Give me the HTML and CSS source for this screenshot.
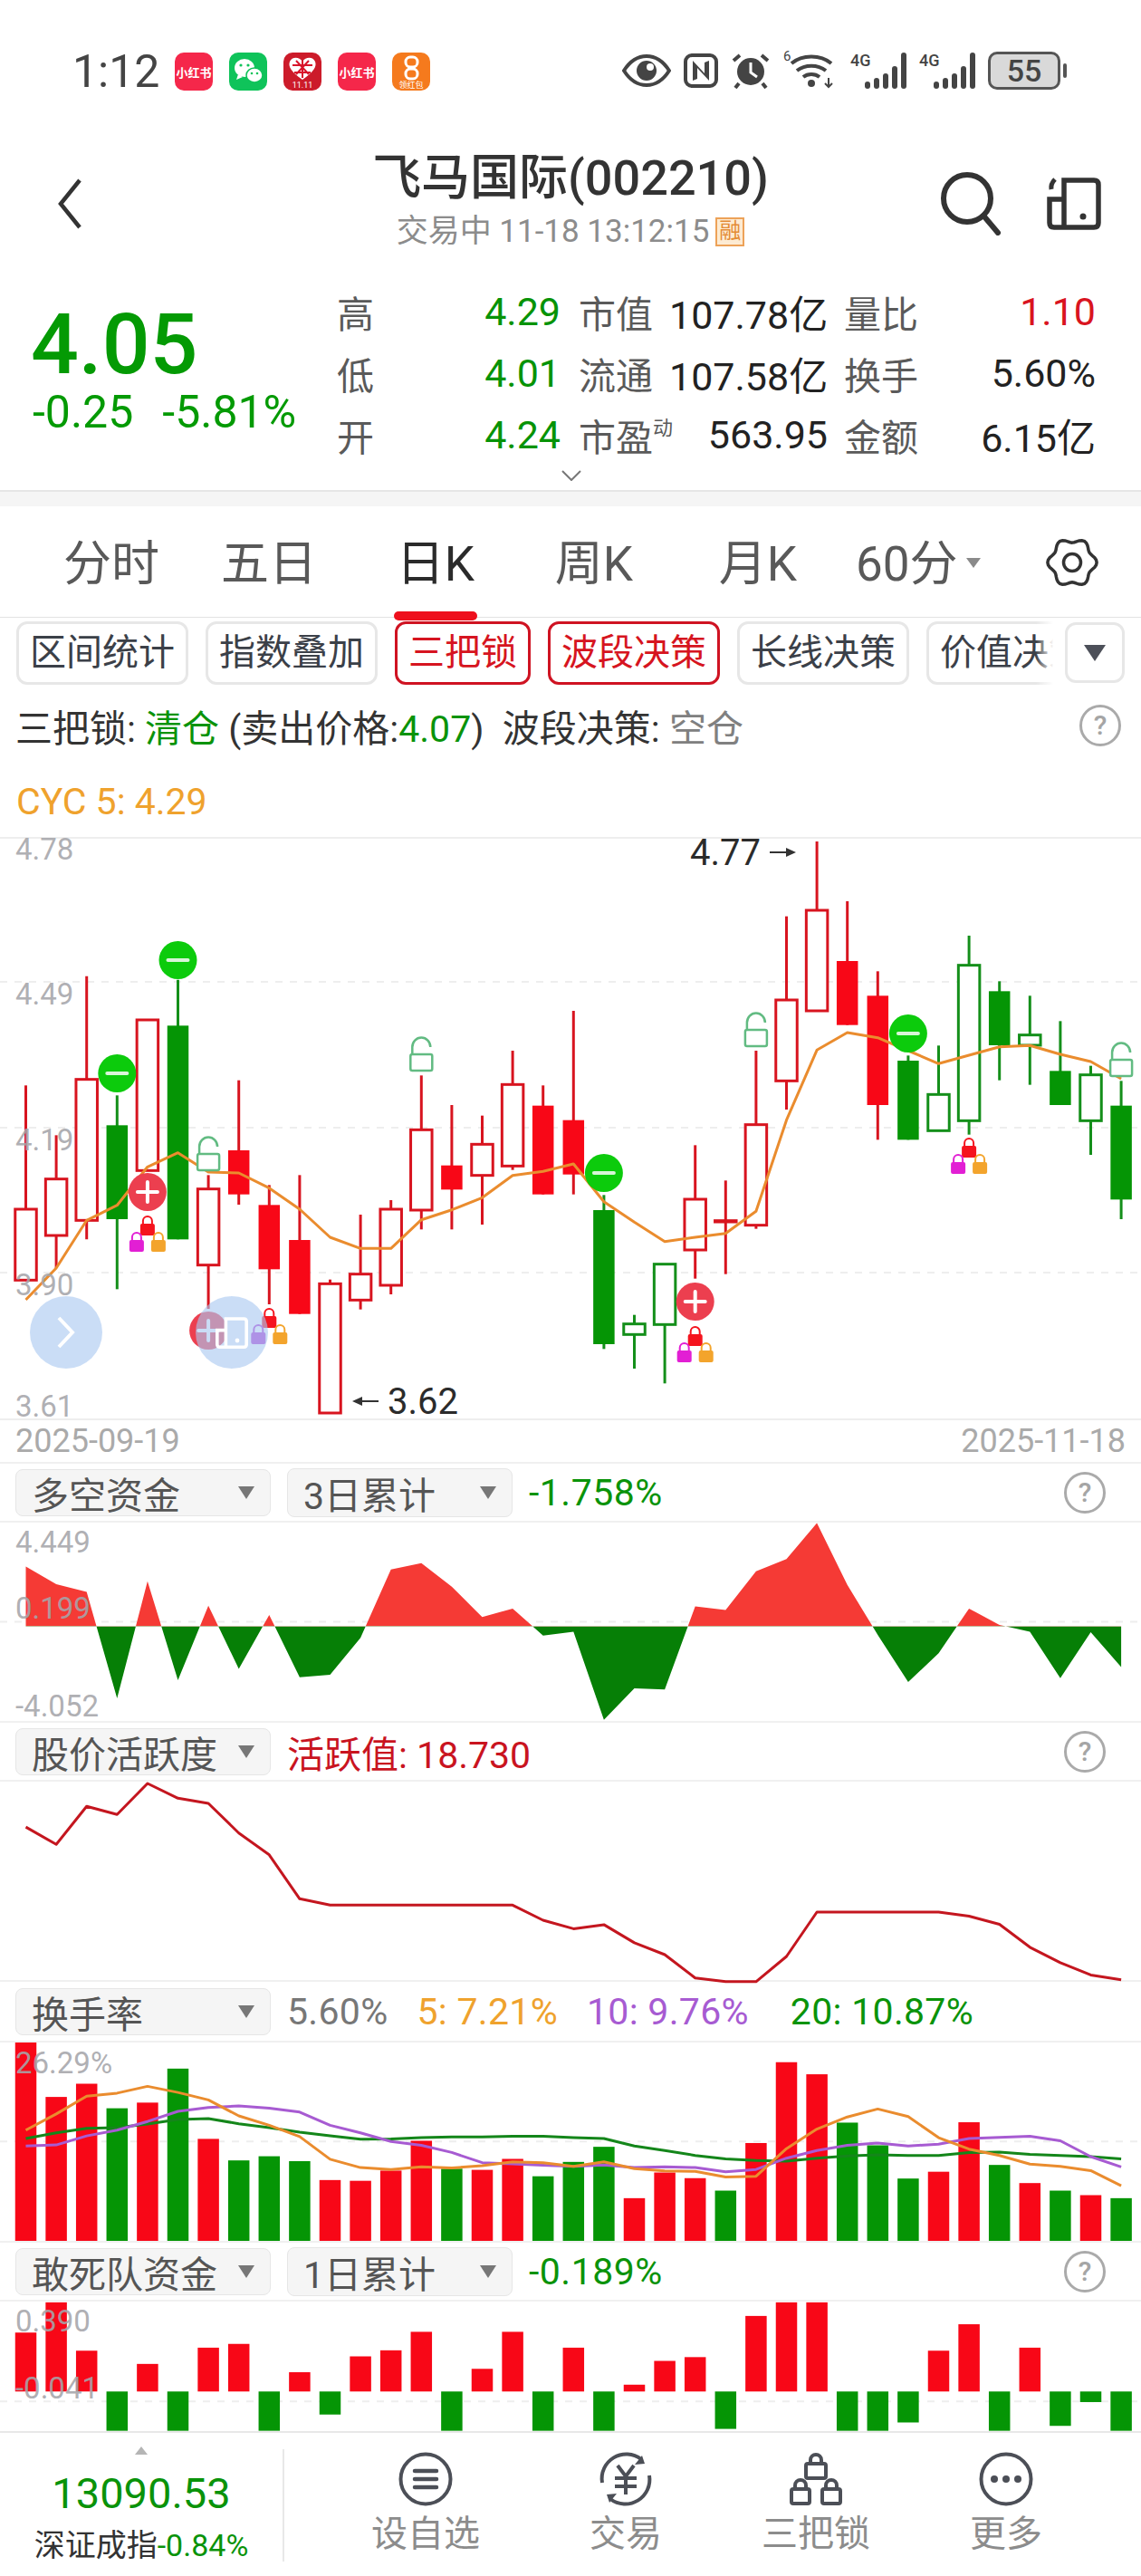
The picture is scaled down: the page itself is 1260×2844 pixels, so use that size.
FILE: index.html
```html
<!DOCTYPE html>
<html lang="zh-CN">
<head>
  <meta charset="UTF-8">
  <title>飞马国际(002210)</title>
  <link rel="stylesheet" href="styles.css">
</head>
<body>
  <div id="app">
    <div class="status">
      <span class="clock">1:12</span>
      <div class="apps">
        <span class="app app-xhs">小红书</span>
        <span class="app app-wx">
          <svg viewBox="0 0 40 42" width="40" height="42"><ellipse cx="16" cy="17" rx="11" ry="10" fill="#fff"/><path d="M9 24l-2 6 7-3z" fill="#fff"/><ellipse cx="27" cy="25" rx="9" ry="8" fill="#fff" stroke="#0fc35a" stroke-width="1.5"/><circle cx="12" cy="14" r="1.6" fill="#0fc35a"/><circle cx="20" cy="14" r="1.6" fill="#0fc35a"/><circle cx="24" cy="23" r="1.3" fill="#0fc35a"/><circle cx="30" cy="23" r="1.3" fill="#0fc35a"/></svg>
        </span>
        <span class="app app-tb">
          <svg viewBox="0 0 42 42" width="42" height="42"><path d="M21 30C8 21 5 15 7 10c2-5 10-6 14 0 4-6 12-5 14 0 2 5-1 11-14 20z" fill="#fff"/><path d="M21 9v19M10 14h22M12 22h18M14 9l14 15M28 9L14 24" stroke="#d8152b" stroke-width="2"/></svg>
          <em>11.11</em>
        </span>
        <span class="app app-xhs">小红书</span>
        <span class="app app-hb">
          <svg viewBox="0 0 42 42" width="42" height="42"><rect x="15" y="5" width="13" height="11" rx="5" fill="none" stroke="#fff" stroke-width="3"/><rect x="15" y="18" width="13" height="11" rx="5" fill="none" stroke="#fff" stroke-width="3"/></svg>
          <em>领红包</em>
        </span>
      </div>
      <div class="sys">
        <svg width="54" height="38" viewBox="0 0 54 38"><path d="M2 19C9 8 18 3 27 3s18 5 25 16c-7 11-16 16-25 16S9 30 2 19z" fill="none" stroke="#444" stroke-width="4"/><circle cx="27" cy="19" r="11" fill="#444"/><circle cx="31" cy="15" r="4" fill="#fff"/></svg>
        <svg width="38" height="38" viewBox="0 0 38 38"><rect x="2" y="2" width="34" height="34" rx="7" fill="none" stroke="#444" stroke-width="4"/><path d="M10 8v22l5-2V16l13 14V8l-5 2v12z" fill="#444"/></svg>
        <svg width="44" height="40" viewBox="0 0 44 40"><circle cx="22" cy="21" r="15" fill="#444"/><path d="M22 11v11l7 5" fill="none" stroke="#fff" stroke-width="3"/><path d="M3 9l7-6M41 9l-7-6M9 34l-4 5M35 34l4 5" stroke="#444" stroke-width="4"/></svg>
        <span class="wifi">
          <i>6</i>
          <svg width="54" height="40" viewBox="0 0 54 40"><path d="M3 12c12-10 32-10 44 0M9 20c9-7 23-7 32 0M16 27c5-4 13-4 18 0" fill="none" stroke="#444" stroke-width="4"/><circle cx="25" cy="34" r="4" fill="#444"/><path d="M44 28v10M40 34l4 4 4-4" fill="none" stroke="#444" stroke-width="2"/></svg>
        </span>
        <span class="signal"><i>4G</i><b class="s1"></b><b class="s2"></b><b class="s3"></b><b class="s4"></b><b class="s5"></b></span>
        <span class="signal"><i>4G</i><b class="s1"></b><b class="s2"></b><b class="s3"></b><b class="s4"></b><b class="s5"></b></span>
        <span class="battery"><span class="battery-body">55</span><span class="battery-tip"></span></span>
      </div>
    </div>

    <div class="header">
      <svg class="back" width="30" height="58" viewBox="0 0 30 58"><path d="M26 3L5 29l21 26" fill="none" stroke="#333" stroke-width="4.5"/></svg>
      <div class="title">
        <h1>飞马国际(002210)</h1>
        <p>交易中 11-18 13:12:15<span class="badge">融</span></p>
      </div>
      <svg class="search" width="72" height="70" viewBox="0 0 72 70"><circle cx="32" cy="29" r="26" fill="none" stroke="#333" stroke-width="6"/><path d="M50 48l16 19" stroke="#333" stroke-width="6" stroke-linecap="round"/></svg>
      <svg class="split" width="60" height="60" viewBox="0 0 60 60"><path d="M19 26V5h33q5 0 5 5v42q0 5-5 5H8q-5 0-5-5V26h16v31" fill="none" stroke="#333" stroke-width="5.5"/><circle cx="40" cy="45" r="3.5" fill="#333"/><path d="M9 4Q4 9 5 15" fill="none" stroke="#333" stroke-width="5"/></svg>
    </div>

    <div class="quote">
      <div class="price">
        <div class="price-now">4.05</div>
        <div class="price-chg"><span>-0.25</span><span>-5.81%</span></div>
      </div>
      <div class="stats">
        <span class="q-label">高</span><span class="q-val up-green">4.29</span>
        <span class="q-label q-mid">市值</span><span class="q-val">107.78亿</span>
        <span class="q-label q-end">量比</span><span class="q-val q-red">1.10</span>
        <span class="q-label">低</span><span class="q-val up-green">4.01</span>
        <span class="q-label q-mid">流通</span><span class="q-val">107.58亿</span>
        <span class="q-label q-end">换手</span><span class="q-val">5.60%</span>
        <span class="q-label">开</span><span class="q-val up-green">4.24</span>
        <span class="q-label q-mid">市盈<sup>动</sup></span><span class="q-val">563.95</span>
        <span class="q-label q-end">金额</span><span class="q-val">6.15亿</span>
      </div>
      <svg class="expand" width="22" height="12" viewBox="0 0 22 12"><path d="M1 1l10 10L21 1" fill="none" stroke="#777" stroke-width="2"/></svg>
    </div>
    <div class="gap-bar"></div>

    <div class="tabs">
      <span class="tab">分时</span>
      <span class="tab">五日</span>
      <span class="tab active">日K</span>
      <span class="tab">周K</span>
      <span class="tab">月K</span>
      <span class="tab tab-more">60分<i class="tri tri-small"></i></span>
      <svg class="gear" width="58" height="58" viewBox="0 0 58 58"><path id="gearPath" fill="none" stroke="#333" stroke-width="3.5"/><circle cx="29" cy="29" r="9.5" fill="none" stroke="#333" stroke-width="3.5"/></svg>
    </div>

    <div class="toolbar">
      <div class="chips">
        <span class="chip">区间统计</span>
        <span class="chip">指数叠加</span>
        <span class="chip on">三把锁</span>
        <span class="chip on">波段决策</span>
        <span class="chip">长线决策</span>
        <span class="chip">价值决策</span>
      </div>
      <span class="chip-more"><i class="tri"></i></span>
    </div>

    <div class="info">
      <span>三把锁: <b class="txt-green">清仓</b> (卖出价格:<b class="txt-green">4.07</b>)&nbsp; 波段决策: <b class="txt-gray">空仓</b></span>
      <span class="help help-info">?</span>
    </div>
    <div class="cyc">CYC 5: 4.29</div>

    <div class="chart chart-main">
      <svg id="mainChart" width="1260" height="642"></svg>
      <span class="axis a-478">4.78</span>
      <span class="axis a-449">4.49</span>
      <span class="axis a-419">4.19</span>
      <span class="axis a-390">3.90</span>
      <span class="axis a-361">3.61</span>
      <span class="peak peak-high">4.77 <svg width="30" height="12" viewBox="0 0 30 12"><path d="M0 6h20" stroke="#333" stroke-width="2"/><path d="M18 1l11 5-11 5z" fill="#333"/></svg></span>
      <span class="peak peak-low"><svg width="30" height="12" viewBox="0 0 30 12"><path d="M10 6h20" stroke="#333" stroke-width="2"/><path d="M12 1L1 6l11 5z" fill="#333"/></svg> 3.62</span>
      <span class="float float-a">
        <svg width="24" height="38" viewBox="0 0 24 38"><path d="M4 3l15 16L4 35" fill="none" stroke="#fff" stroke-width="4"/></svg>
      </span>
      <span class="float float-b">
        <svg width="36" height="36" viewBox="0 0 60 60"><path d="M19 26V5h33q5 0 5 5v42q0 5-5 5H8q-5 0-5-5V26h16v31" fill="none" stroke="#fff" stroke-width="6"/><circle cx="40" cy="45" r="4" fill="#fff"/></svg>
      </span>
    </div>
    <div class="dates"><span>2025-09-19</span><span>2025-11-18</span></div>

    <div class="panel-head">
      <span class="select">多空资金<i class="tri"></i></span>
      <span class="select select-sm">3日累计<i class="tri"></i></span>
      <span class="val txt-green">-1.758%</span>
      <span class="help">?</span>
    </div>
    <div class="chart chart-fund">
      <svg id="fundChart" width="1260" height="219"></svg>
      <span class="axis a-f1">4.449</span>
      <span class="axis a-f2">0.199</span>
      <span class="axis a-f3">-4.052</span>
    </div>

    <div class="panel-head">
      <span class="select">股价活跃度<i class="tri"></i></span>
      <span class="val txt-red">活跃值: 18.730</span>
      <span class="help">?</span>
    </div>
    <div class="chart chart-fund chart-open">
      <svg id="activeChart" width="1260" height="219"></svg>
    </div>

    <div class="panel-head panel-tall">
      <span class="select">换手率<i class="tri"></i></span>
      <span class="val txt-mute">5.60%</span>
      <span class="val txt-orange">5: 7.21%</span>
      <span class="val txt-purple">10: 9.76%</span>
      <span class="val txt-green">20: 10.87%</span>
    </div>
    <div class="chart chart-fund">
      <svg id="turnChart" width="1260" height="219"></svg>
      <span class="axis a-t1">26.29%</span>
    </div>

    <div class="panel-head">
      <span class="select">敢死队资金<i class="tri"></i></span>
      <span class="select select-sm">1日累计<i class="tri"></i></span>
      <span class="val txt-green">-0.189%</span>
      <span class="help">?</span>
    </div>
    <div class="chart chart-dare">
      <svg id="dareChart" width="1260" height="143"></svg>
      <span class="axis a-d1">0.390</span>
      <span class="axis a-d2">-0.041</span>
    </div>

    <div class="nav">
      <div class="index">
        <i class="tri-up"></i>
        <div class="index-num">13090.53</div>
        <div class="index-name">深证成指<span class="txt-green">-0.84%</span></div>
      </div>
      <div class="nav-items">
        <div class="nav-item">
          <svg width="60" height="60" viewBox="0 0 60 60"><circle cx="30" cy="30" r="27.5" fill="none" stroke="#4c4f57" stroke-width="4"/><path d="M18 21h24M18 30h24M18 39h24" stroke="#4c4f57" stroke-width="4.5" stroke-linecap="round"/></svg>
          <span>设自选</span>
        </div>
        <div class="nav-item">
          <svg width="60" height="60" viewBox="0 0 60 60"><path d="M4 34A27 27 0 0 1 47 8M56 26A27 27 0 0 1 13 52" fill="none" stroke="#4c4f57" stroke-width="4"/><path d="M40 14l11-1-3-9M20 46L9 47l3 9" fill="#4c4f57"/><path d="M21 15l9 12 9-12M18 29h24M18 38h24M30 27v20" fill="none" stroke="#4c4f57" stroke-width="4"/></svg>
          <span>交易</span>
        </div>
        <div class="nav-item">
          <svg width="60" height="60" viewBox="0 0 60 60"><g fill="none" stroke="#4c4f57" stroke-width="4"><rect x="19" y="13" width="22" height="16" rx="2"/><path d="M24 13V9a6 6 0 0 1 12 0v4"/><rect x="3" y="41" width="20" height="16" rx="2"/><path d="M7 41v-4a6 6 0 0 1 12 0v4"/><rect x="37" y="41" width="20" height="16" rx="2"/><path d="M41 41v-4a6 6 0 0 1 12 0v4"/></g></svg>
          <span>三把锁</span>
        </div>
        <div class="nav-item">
          <svg width="60" height="60" viewBox="0 0 60 60"><circle cx="30" cy="30" r="27.5" fill="none" stroke="#4c4f57" stroke-width="4"/><circle cx="17" cy="30" r="4" fill="#4c4f57"/><circle cx="30" cy="30" r="4" fill="#4c4f57"/><circle cx="43" cy="30" r="4" fill="#4c4f57"/></svg>
          <span>更多</span>
        </div>
      </div>
    </div>
  </div>

  <script src="chart.js"></script>
</body>
</html>
```

FILE: styles.css
```css
* {
  box-sizing: border-box;
}
body {
  margin: 0;
  background: #fff;
  font-family: Roboto, "Noto Sans CJK SC", sans-serif;
  color: #333;
}
#app {
  width: 1260px;
  height: 2844px;
  overflow: hidden;
}
i, em {
  font-style: normal;
}
b {
  font-weight: 400;
}

/* status bar */
.status {
  height: 140px;
  padding: 56px 82px 0 80px;
  display: flex;
  align-items: flex-start;
}
.clock {
  width: 113px;
  font-size: 50px;
  line-height: 46px;
  color: #444;
}
.apps {
  display: flex;
  gap: 18px;
  padding-top: 2px;
}
.app {
  width: 42px;
  height: 42px;
  border-radius: 10px;
  display: flex;
  align-items: center;
  justify-content: center;
  position: relative;
  overflow: hidden;
  color: #fff;
  font-size: 13px;
  font-weight: 700;
  white-space: nowrap;
}
.app-xhs {
  background: #f5274a;
}
.app-wx {
  background: #0fc35a;
}
.app-tb {
  background: #cc1b2a;
}
.app-hb {
  background: #f57a1d;
}
.app em {
  position: absolute;
  left: 0;
  right: 0;
  bottom: 0;
  text-align: center;
  font-size: 9px;
  line-height: 11px;
  font-weight: 400;
}
.sys {
  margin-left: auto;
  display: flex;
  align-items: center;
  gap: 14px;
  height: 44px;
}
.wifi {
  position: relative;
  padding-left: 6px;
  display: flex;
}
.wifi i {
  position: absolute;
  left: 0;
  top: -5px;
  font-size: 15px;
  color: #444;
}
.signal {
  position: relative;
  width: 62px;
  height: 40px;
  display: flex;
  align-items: flex-end;
  justify-content: flex-end;
  gap: 4px;
}
.signal i {
  position: absolute;
  left: 0;
  top: -2px;
  font-size: 18px;
  font-weight: 500;
  color: #444;
}
.signal b {
  width: 6px;
  background: #444;
  border-radius: 3px;
}
.signal .s1 { height: 8px; }
.signal .s2 { height: 12px; }
.signal .s3 { height: 17px; }
.signal .s4 { height: 25px; }
.signal .s5 { height: 40px; }
.battery {
  display: flex;
  align-items: center;
  gap: 3px;
}
.battery-body {
  width: 80px;
  height: 42px;
  border: 3px solid #555;
  border-radius: 10px;
  background: #d9d9d9;
  text-align: center;
  font-size: 34px;
  line-height: 36px;
  font-weight: 500;
  color: #444;
}
.battery-tip {
  width: 4px;
  height: 16px;
  border-radius: 2px;
  background: #555;
}

/* stock header */
.header {
  height: 160px;
  position: relative;
  display: flex;
  justify-content: center;
}
.title {
  text-align: center;
  padding-top: 27px;
}
.title h1 {
  margin: 0;
  font-size: 54px;
  line-height: 60px;
  font-weight: 500;
  color: #333;
}
.title p {
  margin: 8px 0 0;
  font-size: 35px;
  line-height: 42px;
  color: #8c8c8c;
  display: flex;
  justify-content: center;
  align-items: center;
  white-space: nowrap;
}
.badge {
  width: 32px;
  height: 32px;
  margin-left: 7px;
  background: #fdebd3;
  border: 2px solid #eda258;
  color: #e48b35;
  font-size: 24px;
  line-height: 26px;
  text-align: center;
}
.back {
  position: absolute;
  left: 62px;
  top: 56px;
}
.search {
  position: absolute;
  left: 1036px;
  top: 50px;
}
.split {
  position: absolute;
  left: 1156px;
  top: 54px;
}

/* quote */
.quote {
  height: 241px;
  position: relative;
  display: flex;
}
.price {
  width: 372px;
  padding: 39px 0 0 34px;
}
.price-now {
  font-size: 93px;
  line-height: 84px;
  font-weight: 500;
  color: #049a04;
}
.price-chg {
  display: flex;
  gap: 32px;
  font-size: 50px;
  line-height: 50px;
  margin-top: 7px;
  padding-left: 2px;
  color: #049a04;
}
.stats {
  padding-top: 10px;
  display: grid;
  grid-template-columns: 108px 139px 120px 175px 113px 183px;
  grid-auto-rows: 68px;
  font-size: 41px;
  align-items: center;
}
.q-label {
  color: #5a5a5a;
}
.q-mid {
  padding-left: 20px;
  white-space: nowrap;
}
.q-end {
  padding-left: 18px;
}
.q-label sup {
  font-size: 22px;
  line-height: 0;
  vertical-align: 18px;
}
.q-val {
  text-align: right;
  color: #222;
  font-size: 43px;
  white-space: nowrap;
}
.up-green {
  color: #079307;
}
.q-red {
  color: #d9141f;
}
.expand {
  position: absolute;
  left: 620px;
  top: 219px;
}
.gap-bar {
  height: 18px;
  background: #f5f5f5;
  border-top: 2px solid #e6e6e6;
}

/* period tabs */
.tabs {
  height: 123px;
  padding: 5px 0 0 36px;
  position: relative;
  display: grid;
  grid-template-columns: 174px 174px 194px 156px 206px 190px;
  align-items: center;
  border-bottom: 1px solid #e2e2e2;
  font-size: 53px;
  color: #595959;
}
.tab {
  position: relative;
  text-align: center;
  height: 54px;
  line-height: 54px;
}
.tab.active {
  color: #2b2b2b;
}
.tab.active::after {
  content: "";
  position: absolute;
  left: 50%;
  bottom: -35px;
  width: 92px;
  height: 10px;
  margin-left: -46px;
  border-radius: 5px;
  background: #ee0f1c;
}
.tab-more {
  text-align: left;
  padding-left: 5px;
  white-space: nowrap;
}
.gear {
  position: absolute;
  left: 1155px;
  top: 33px;
}
.tri {
  display: inline-block;
  width: 0;
  height: 0;
  border-left: 9px solid transparent;
  border-right: 9px solid transparent;
  border-top: 14px solid #777;
}
.tri-small {
  margin-left: 9px;
  vertical-align: 14px;
  border-left-width: 8px;
  border-right-width: 8px;
  border-top-width: 11px;
  border-top-color: #8a8a8a;
}

/* indicator chips */
.toolbar {
  height: 78px;
  padding-top: 4px;
  display: flex;
  align-items: flex-start;
}
.chips {
  width: 1168px;
  padding-left: 18px;
  display: flex;
  gap: 19px;
  overflow: hidden;
  position: relative;
  flex: none;
}
.chips::after {
  content: "";
  position: absolute;
  right: 0;
  top: 0;
  bottom: 0;
  width: 24px;
  background: linear-gradient(to right, rgba(255,255,255,0), #fff 80%);
}
.chip {
  flex: none;
  height: 70px;
  padding: 0 12px;
  border: 3px solid #e7e7e7;
  border-radius: 12px;
  font-size: 40px;
  line-height: 63px;
  color: #3b4048;
}
.chip.on {
  border-color: #cf1322;
  color: #d61420;
}
.chip-more {
  width: 66px;
  height: 67px;
  margin: 1px 0 0 8px;
  border: 3px solid #e7e7e7;
  border-radius: 12px;
  display: flex;
  align-items: center;
  justify-content: center;
}
.chip-more .tri {
  border-left-width: 12px;
  border-right-width: 12px;
  border-top: 18px solid #4d5059;
}

/* signal info */
.info {
  height: 86px;
  padding: 0 22px 5px 17px;
  display: flex;
  align-items: center;
  justify-content: space-between;
  font-size: 41px;
  color: #333;
}
.txt-green {
  color: #0a930a;
}
.txt-gray {
  color: #808080;
}
.txt-red {
  color: #c9141f;
}
.txt-mute {
  color: #777;
}
.txt-orange {
  color: #efa22d;
}
.txt-purple {
  color: #a75bd2;
}
.help {
  width: 46px;
  height: 46px;
  margin-left: auto;
  border: 3px solid #aaa;
  border-radius: 50%;
  text-align: center;
  font-size: 30px;
  line-height: 40px;
  font-weight: 500;
  color: #a5a5a5;
  letter-spacing: 0;
  flex: none;
}
.cyc {
  height: 78px;
  padding-left: 18px;
  font-size: 41px;
  line-height: 78px;
  color: #efa22d;
}

/* charts */
.chart {
  position: relative;
}
.chart > svg {
  display: block;
}
.chart-main {
  height: 642px;
}
.chart-fund {
  height: 219px;
}
.chart-dare {
  height: 143px;
}
.chart-open > svg {
  overflow: visible;
}
.axis {
  position: absolute;
  left: 17px;
  font-size: 33px;
  line-height: 33px;
  color: rgba(165,165,170,0.9);
}
.a-478 { top: -3px; }
.a-449 { top: 157px; }
.a-419 { top: 318px; }
.a-390 { top: 478px; }
.a-361 { top: 612px; }
.a-f1 { top: 5px; }
.a-f2 { top: 78px; }
.a-f3 { top: 186px; }
.a-t1 { top: 6px; }
.a-d1 { top: 5px; }
.a-d2 { top: 79px; }
.peak {
  position: absolute;
  font-size: 40px;
  line-height: 36px;
  color: #2b2b2b;
  white-space: nowrap;
}
.peak svg {
  vertical-align: 8px;
}
.peak-high {
  left: 762px;
  top: 0;
}
.peak-low {
  left: 388px;
  top: 606px;
}
.float {
  position: absolute;
  top: 507px;
  width: 80px;
  height: 80px;
  border-radius: 50%;
  background: rgba(170,200,240,0.62);
  display: flex;
  align-items: center;
  justify-content: center;
}
.float-a {
  left: 33px;
}
.float-b {
  left: 216px;
}
.dates {
  height: 48px;
  padding: 0 17px;
  display: flex;
  justify-content: space-between;
  align-items: center;
  font-size: 36px;
  color: #aaa;
  border-top: 2px solid #eee;
}

/* indicator panels */
.panel-head {
  height: 67px;
  padding: 0 39px 0 17px;
  display: flex;
  align-items: center;
  gap: 18px;
  font-size: 41px;
  letter-spacing: 0.5px;
  border-bottom: 2px solid #f0f0f0;
  border-top: 2px solid #f0f0f0;
}
.panel-head .txt-red {
  letter-spacing: 0;
}
.panel-tall {
  height: 69px;
  gap: 32px;
  letter-spacing: 0.3px;
}
.panel-tall .select {
  margin-right: -14px;
}
.panel-tall .txt-green {
  margin-left: 14px;
}
.select {
  width: 282px;
  height: 52px;
  padding: 0 17px 0 17px;
  display: flex;
  align-items: center;
  justify-content: space-between;
  border: 1px solid #e6e6e6;
  border-radius: 8px;
  background: #f5f5f5;
  color: #555;
  letter-spacing: 0;
  flex: none;
}
.select-sm {
  width: 249px;
  height: 54px;
}
.val {
  white-space: nowrap;
}

/* bottom nav */
.nav {
  height: 160px;
  display: flex;
  border-top: 2px solid #e8e8e8;
}
.index {
  width: 314px;
  margin-top: 18px;
  height: 124px;
  border-right: 2px solid #e8e8e8;
  text-align: center;
  color: #333;
}
.tri-up {
  display: block;
  width: 0;
  height: 0;
  margin: -3px auto 0;
  border-left: 7px solid transparent;
  border-right: 7px solid transparent;
  border-bottom: 9px solid #b5b5b5;
}
.index-num {
  font-size: 47px;
  line-height: 50px;
  margin-top: 18px;
  color: #0a930a;
}
.index-name {
  margin-top: 14px;
  font-size: 34px;
  line-height: 36px;
  white-space: nowrap;
}
.nav-items {
  padding: 21px 0 0 96px;
  display: flex;
  gap: 90px;
}
.nav-item {
  width: 120px;
  display: flex;
  flex-direction: column;
  align-items: center;
  font-size: 40px;
  color: #8c8c8c;
}
.nav-item:first-child {
  margin-right: 11px;
}
.nav-item span {
  margin-top: 7px;
  line-height: 48px;
}
```

FILE: chart.js
```js
// Slot centres for the 37 trading days, shared by every chart
const slotX = i => 28.5 + i * 33.6;
const BAR_W = 23.5;

const RED = '#f80717';
const GREEN = '#059505';
const LINE_RED = '#d8141f';
const LINE_GREEN = '#148f1a';

// high, body top, body bottom, low, kind (r/g solid, R/G hollow)
const candles = [
  [415, 825, 1060, 1060, 'R'], [580, 725, 912, 1020, 'R'], [53, 395, 862, 925, 'R'],
  [448, 547, 858, 1090, 'g'], [198, 198, 697, 697, 'R'], [65, 217, 925, 925, 'g'],
  [712, 758, 1010, 1155, 'R'], [398, 630, 776, 810, 'r'], [745, 811, 1024, 1140, 'r'],
  [712, 927, 1172, 1172, 'r'], [1058, 1072, 1500, 1500, 'R'], [843, 1040, 1126, 1157, 'R'],
  [795, 825, 1077, 1107, 'R'], [382, 562, 828, 892, 'R'], [480, 680, 760, 892, 'r'],
  [515, 610, 713, 876, 'R'], [300, 412, 682, 695, 'R'], [415, 482, 776, 776, 'r'],
  [168, 530, 710, 776, 'r'], [778, 828, 1272, 1288, 'g'], [1175, 1205, 1240, 1353, 'G'],
  [1007, 1007, 1207, 1402, 'G'], [613, 792, 960, 1055, 'R'], [730, 863, 867, 1040, 'R'],
  [300, 545, 878, 890, 'R'], [-145, 132, 400, 495, 'R'], [-393, -165, 168, 168, 'R'],
  [-195, 3, 215, 215, 'r'], [37, 118, 480, 595, 'r'], [316, 333, 595, 595, 'g'],
  [283, 445, 565, 565, 'G'], [-81, 17, 532, 578, 'G'], [70, 103, 282, 398, 'g'],
  [118, 248, 282, 413, 'G'], [202, 367, 480, 480, 'g'], [350, 380, 532, 645, 'G'],
  [400, 482, 793, 858, 'g']
];

const cycLine = [1125, 1020, 862, 812, 685, 638, 702, 705, 755, 825, 918, 955, 955, 860, 827, 787, 713, 700, 675,
  800, 868, 932, 918, 905, 832, 530, 298, 240, 257, 300, 343, 315, 287, 283, 312, 336, 393];

const fundLine = [415, 463, 484, 772, 455, 723, 521, 692, 546, 715, 708, 608, 423, 406, 470, 552, 529, 602, 592,
  830, 745, 748, 523, 533, 428, 395, 298, 465, 600, 728, 650, 529, 573, 592, 717, 593, 687];

const activeLine = [1120, 1167, 1064, 1086, 1002, 1042, 1056, 1136, 1195, 1314, 1331, 1331, 1331, 1331, 1331, 1331,
  1331, 1372, 1395, 1384, 1433, 1465, 1528, 1538, 1538, 1470, 1350, 1350, 1350, 1350, 1350, 1361, 1383, 1445, 1487,
  1520, 1533];

// top of bar, colour
const turnBars = [[155, 'r'], [300, 'r'], [265, 'r'], [330, 'g'], [315, 'r'], [225, 'g'], [411, 'r'], [468, 'g'],
  [457, 'g'], [470, 'g'], [520, 'r'], [522, 'r'], [495, 'r'], [416, 'r'], [490, 'g'], [493, 'r'], [464, 'r'],
  [510, 'g'], [472, 'g'], [432, 'g'], [568, 'r'], [500, 'r'], [515, 'r'], [548, 'g'], [422, 'r'], [208, 'r'],
  [240, 'r'], [368, 'g'], [428, 'g'], [516, 'g'], [498, 'r'], [367, 'r'], [480, 'g'], [528, 'r'], [548, 'g'],
  [560, 'r'], [568, 'g']];

const ma5 = [388, 345, 298, 290, 272, 288, 308, 350, 375, 405, 465, 487, 492, 485, 488, 482, 472, 474, 484, 472, 490,
  496, 497, 512, 510, 437, 385, 353, 332, 352, 408, 438, 455, 478, 484, 495, 535];
const ma10 = [430, 427, 403, 388, 365, 338, 328, 324, 330, 340, 375, 395, 418, 428, 447, 474, 477, 481, 484, 480, 487,
  485, 487, 498, 492, 462, 442, 428, 422, 430, 425, 410, 407, 404, 416, 458, 485];
const ma20 = [410, 395, 383, 381, 372, 360, 357, 371, 381, 393, 403, 412, 411, 408, 406, 406, 404, 404, 408, 410, 430,
  442, 455, 464, 468, 470, 462, 456, 453, 455, 455, 447, 446, 452, 455, 458, 464];

const dareBars = [925, 845, 973, 1185, 1008, 1185, 965, 955, 1185, 1030, 1142, 988, 972, 923, 1185, 1021, 923, 1185,
  965, 1185, 1063, 1000, 990, 1180, 881, 845, 845, 1185, 1185, 1163, 973, 903, 1185, 965, 1172, 1109, 1185];

function el(parent, tag, attrs) {
  const node = document.createElementNS('http://www.w3.org/2000/svg', tag);
  for (const key in attrs) node.setAttribute(key, attrs[key]);
  parent.appendChild(node);
  return node;
}

function hLine(svg, y, dashed) {
  el(svg, 'line', {
    x1: 0, x2: 1260, y1: y, y2: y, stroke: '#eeeeee', 'stroke-width': 2,
    'stroke-dasharray': dashed ? '8 8' : 'none'
  });
}

function polyline(svg, values, toY, color, width) {
  const points = values.map((v, i) => slotX(i) + ',' + toY(v).toFixed(1)).join(' ');
  el(svg, 'polyline', { points, fill: 'none', stroke: color, 'stroke-width': width, 'stroke-linejoin': 'round' });
}

function drawCandles(svg, toY) {
  candles.forEach((c, i) => {
    const x = slotX(i);
    const [high, top, bottom, low, kind] = c;
    const hollow = kind === 'R' || kind === 'G';
    const isRed = kind === 'r' || kind === 'R';
    const lineColor = isRed ? LINE_RED : LINE_GREEN;
    el(svg, 'line', { x1: x, x2: x, y1: toY(high), y2: toY(low), stroke: lineColor, 'stroke-width': 3 });
    if (hollow) {
      el(svg, 'rect', {
        x: x - BAR_W / 2, y: toY(top), width: BAR_W, height: toY(bottom) - toY(top),
        fill: '#fff', stroke: lineColor, 'stroke-width': 3
      });
    } else {
      el(svg, 'rect', {
        x: x - BAR_W / 2, y: toY(top), width: BAR_W, height: toY(bottom) - toY(top),
        fill: isRed ? RED : GREEN
      });
    }
  });
}

function signCircle(svg, i, y, plus) {
  const x = slotX(i);
  el(svg, 'circle', { cx: x, cy: y, r: 21, fill: plus ? '#ec3f4f' : '#0ccb0c' });
  el(svg, 'line', {
    x1: x - 11, x2: x + 11, y1: y, y2: y,
    stroke: plus ? '#fff' : '#d8f5d8', 'stroke-width': 4, 'stroke-linecap': 'round'
  });
  if (plus) {
    el(svg, 'line', {
      x1: x, x2: x, y1: y - 11, y2: y + 11, stroke: '#fff', 'stroke-width': 4, 'stroke-linecap': 'round'
    });
  }
}

function closedLock(svg, x, y, color) {
  el(svg, 'path', { d: `M${x - 5} ${y + 10}v-5a5 5 0 0 1 10 0v5`, fill: 'none', stroke: color, 'stroke-width': 2 });
  el(svg, 'rect', { x: x - 8, y: y + 8, width: 16, height: 13, rx: 2, fill: color });
}

function lockSet(svg, i, y, left) {
  const x = slotX(i);
  closedLock(svg, x, y, '#f5141e');
  closedLock(svg, x - 12, y + 18, left || '#e21fd4');
  closedLock(svg, x + 12, y + 18, '#f3a42c');
}

function openLock(svg, i, y) {
  const x = slotX(i);
  el(svg, 'path', {
    d: `M${x - 10} ${y + 19}v-8a10 10.5 0 0 1 20 0`, fill: 'none', stroke: '#62bb82', 'stroke-width': 2.5
  });
  el(svg, 'rect', { x: x - 12, y: y + 19, width: 24, height: 18, rx: 2, fill: '#fff', stroke: '#62bb82', 'stroke-width': 2.5 });
}

function drawMain() {
  const svg = document.getElementById('mainChart');
  const toY = v => 136 + v / 3;
  hLine(svg, 1, false);
  hLine(svg, 160, true);
  hLine(svg, 321, true);
  hLine(svg, 481, true);
  drawCandles(svg, toY);
  polyline(svg, cycLine, toY, '#ea8c2e', 3);

  [[3, 261], [5, 136], [19, 371], [29, 217]].forEach(s => signCircle(svg, s[0], s[1], false));
  [[4, 392], [22, 513]].forEach(s => signCircle(svg, s[0], s[1], true));
  signCircle(svg, 6, 545, true);

  lockSet(svg, 4, 419);
  lockSet(svg, 8, 521, '#b53ad6');
  lockSet(svg, 22, 541);
  lockSet(svg, 31, 333);

  openLock(svg, 6, 331);
  openLock(svg, 13, 221);
  openLock(svg, 24, 194);
  openLock(svg, 36, 227);
}

function drawFund() {
  const svg = document.getElementById('fundChart');
  const toY = v => v / 2.45 - 121;
  const zero = 114.5;
  hLine(svg, 109.5, true);
  const defs = el(svg, 'defs', {});
  const above = el(defs, 'clipPath', { id: 'fundAbove' });
  el(above, 'rect', { x: 0, y: 0, width: 1260, height: zero });
  const below = el(defs, 'clipPath', { id: 'fundBelow' });
  el(below, 'rect', { x: 0, y: zero, width: 1260, height: 219 });
  const pts = fundLine.map((v, i) => slotX(i) + ',' + toY(v).toFixed(1));
  const points = slotX(0) + ',' + zero + ' ' + pts.join(' ') + ' ' + slotX(36) + ',' + zero;
  el(svg, 'polygon', { points, fill: '#f53a35', 'clip-path': 'url(#fundAbove)' });
  el(svg, 'polygon', { points, fill: '#067f06', 'clip-path': 'url(#fundBelow)' });
}

function drawActive() {
  const svg = document.getElementById('activeChart');
  polyline(svg, activeLine, v => v / 2.45 - 407, '#c4161f', 3);
}

function drawTurnover() {
  const svg = document.getElementById('turnChart');
  const toY = v => v / 2.398 - 65;
  hLine(svg, toY(418), true);
  turnBars.forEach((b, i) => {
    const y = toY(b[0]);
    el(svg, 'rect', { x: slotX(i) - 11.75, y, width: BAR_W, height: 219 - y, fill: b[1] === 'r' ? RED : GREEN });
  });
  polyline(svg, ma20, toY, '#14861a', 3);
  polyline(svg, ma10, toY, '#a75bd2', 3);
  polyline(svg, ma5, toY, '#ea8c2e', 3);
}

function drawDare() {
  const svg = document.getElementById('dareChart');
  const toY = v => v / 2.398 - 351.5;
  const zero = toY(1081);
  hLine(svg, toY(1107), true);
  dareBars.forEach((v, i) => {
    const y = toY(v);
    const up = y < zero;
    el(svg, 'rect', {
      x: slotX(i) - 11.75, y: up ? y : zero, width: BAR_W, height: Math.abs(y - zero), fill: up ? RED : GREEN
    });
  });
}

// Settings cog: a circle with six soft bumps
function drawGear() {
  let d = '';
  for (let a = 0; a <= 360; a += 6) {
    const rad = (a - 90) * Math.PI / 180;
    const r = 24.5 + 2.6 * Math.cos(6 * rad);
    d += (a === 0 ? 'M' : 'L') + (29 + r * Math.cos(rad)).toFixed(1) + ' ' + (29 + r * Math.sin(rad)).toFixed(1);
  }
  document.getElementById('gearPath').setAttribute('d', d + 'Z');
}

drawMain();
drawFund();
drawActive();
drawTurnover();
drawDare();
drawGear();
```
